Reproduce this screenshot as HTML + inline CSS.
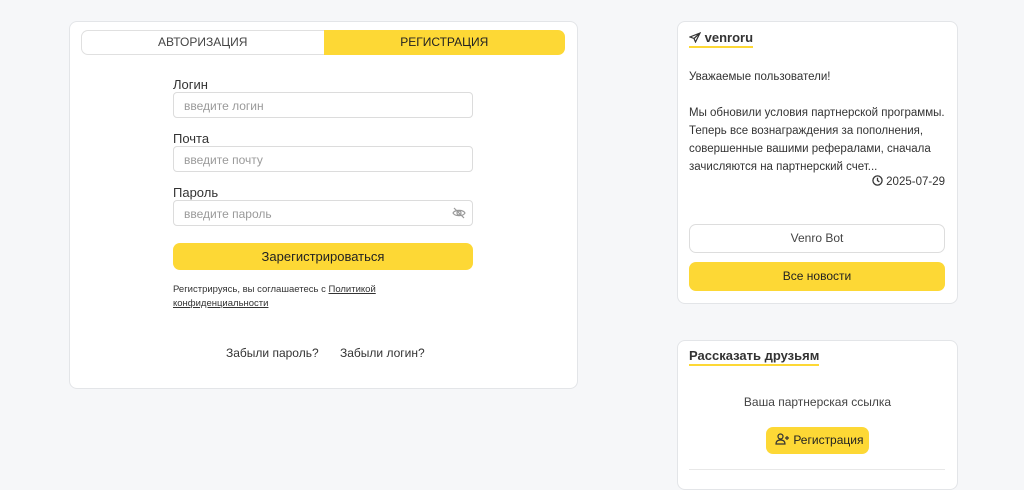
<!DOCTYPE html>
<html><head><meta charset="utf-8"><style>
*{box-sizing:border-box;margin:0;padding:0}
body{width:1024px;height:476px;overflow:hidden;background:#f6f7f9;font-family:"Liberation Sans",sans-serif;color:#333;position:relative}
.card{position:absolute;background:#fff;border:1px solid #e3e5e8;border-radius:8px}
.y{background:#fdd835}
.abs{position:absolute}
.inp{position:absolute;left:173px;width:300px;height:26px;border:1px solid #dcdcdc;border-radius:4px;font-size:12px;color:#9a9a9a;padding:6px 10px}
.lbl{position:absolute;left:173px;font-size:13px;color:#333}
</style></head><body>
<div class="card" style="left:69px;top:21px;width:509px;height:368px"></div>
<div class="abs" style="left:81px;top:30px;width:484px;height:25px;display:flex;font-size:12px">
<div style="flex:1;text-align:center;line-height:23px;color:#444;border:1px solid #e0e0e0;border-right:none;border-radius:7px 0 0 7px">АВТОРИЗАЦИЯ</div>
<div class="y" style="flex:1;text-align:center;line-height:25px;color:#222;border-radius:0 7px 7px 0">РЕГИСТРАЦИЯ</div></div>
<div class="lbl" style="top:77px">Логин</div><div class="inp" style="top:92px">введите логин</div>
<div class="lbl" style="top:131px">Почта</div><div class="inp" style="top:146px">введите почту</div>
<div class="lbl" style="top:185px">Пароль</div><div class="inp" style="top:200px">введите пароль
<svg style="position:absolute;right:6px;top:6px" width="14" height="12" viewBox="0 0 14 12" fill="none" stroke="#999" stroke-width="1.2"><path d="M1 6C3 2.5 11 2.5 13 6C11 9.5 3 9.5 1 6Z"/><circle cx="7" cy="6" r="2"/><path d="M2 1L12 11"/></svg></div>
<div class="abs y" style="left:173px;top:243px;width:300px;height:27px;border-radius:7px;text-align:center;line-height:27px;font-size:13px;color:#222">Зарегистрироваться</div>
<div class="abs" style="left:173px;top:283px;font-size:9.5px;line-height:14px;color:#333">Регистрируясь, вы соглашаетесь с <u>Политикой</u><br><u>конфиденциальности</u></div>
<div class="abs" style="left:226px;top:346px;font-size:12px;color:#333">Забыли пароль?</div>
<div class="abs" style="left:340px;top:346px;font-size:12px;color:#333">Забыли логин?</div>

<div class="card" style="left:677px;top:21px;width:281px;height:283px"></div>
<div class="abs" style="left:689px;top:30px;font-size:13px;font-weight:bold;color:#333;border-bottom:2px solid #fdd835;padding-bottom:1px;width:64px;white-space:nowrap">
<svg width="12" height="11" viewBox="0 0 12 11" fill="none" stroke="#333" stroke-width="1.2" style="vertical-align:-1px"><path d="M11 1L1 5L5 6.5L6.5 10Z M11 1L5 6.5"/></svg> venroru</div>
<div class="abs" style="left:689px;top:68px;font-size:11.5px;line-height:18px;color:#333;width:265px">Уважаемые пользователи!<br><br>Мы обновили условия партнерской программы. Теперь все вознаграждения за пополнения, совершенные вашими рефералами, сначала зачисляются на партнерский счет...</div>
<div class="abs" style="right:79px;top:175px;font-size:11.5px;color:#333"><svg width="11" height="11" viewBox="0 0 12 12" fill="none" stroke="#333" stroke-width="1.4" style="vertical-align:-1px"><circle cx="6" cy="6" r="5"/><path d="M6 3V6L8 7.5"/></svg> 2025-07-29</div>
<div class="abs" style="left:689px;top:224px;width:256px;height:29px;border:1px solid #ddd;border-radius:7px;text-align:center;line-height:27px;font-size:12px;color:#444">Venro Bot</div>
<div class="abs y" style="left:689px;top:262px;width:256px;height:29px;border-radius:7px;text-align:center;line-height:29px;font-size:12px;color:#222">Все новости</div>

<div class="card" style="left:677px;top:340px;width:281px;height:150px"></div>
<div class="abs" style="left:689px;top:348px;font-size:13px;font-weight:bold;color:#333;border-bottom:2px solid #fdd835;padding-bottom:1px">Рассказать друзьям</div>
<div class="abs" style="left:677px;top:395px;width:281px;text-align:center;font-size:12px;color:#444">Ваша партнерская ссылка</div>
<div class="abs y" style="left:766px;top:427px;width:103px;height:27px;border-radius:7px;font-size:12px;color:#222;line-height:27px;padding-left:9px">
<svg width="15" height="12" viewBox="0 0 15 12" fill="none" stroke="#333" stroke-width="1.2" style="vertical-align:-1px"><circle cx="5.5" cy="3.5" r="2.5"/><path d="M1 11C1 8 3 7 5.5 7S10 8 10 11Z M12 3V7 M10 5H14"/></svg> Регистрация</div>
<div class="abs" style="left:689px;top:469px;width:256px;height:1px;background:#e8e8e8"></div>
</body></html>
